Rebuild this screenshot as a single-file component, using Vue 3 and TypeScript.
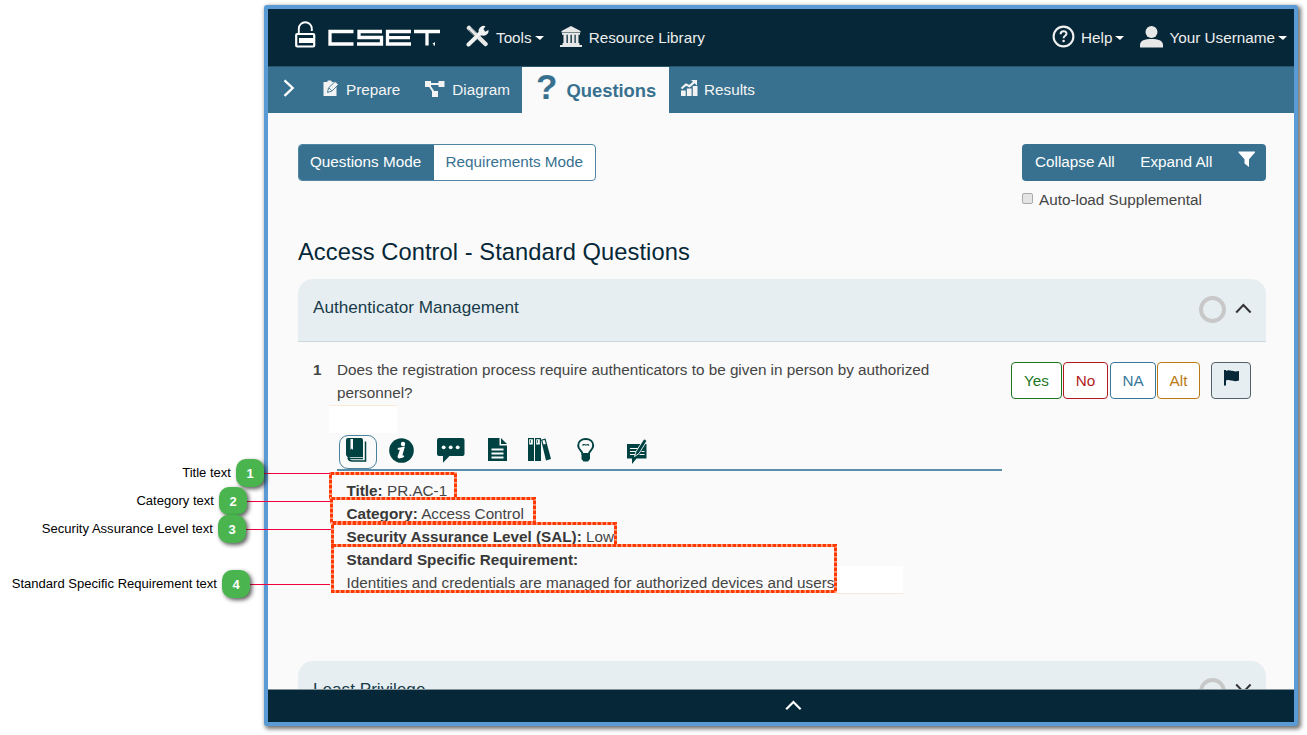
<script setup lang="ts">
interface Callout { n: number; text: string; right: number; top: number; end: number }
interface Box { x: number; y: number; w: number; h: number }
interface Answer { label: string; kind: string }

const callouts: Callout[] = [
  { n: 1, text: 'Title text', right: 264, top: 459, end: 330 },
  { n: 2, text: 'Category text', right: 247, top: 487, end: 330 },
  { n: 3, text: 'Security Assurance Level text', right: 246, top: 515, end: 331 },
  { n: 4, text: 'Standard Specific Requirement text', right: 250, top: 570, end: 330 },
]
const boxes: Box[] = [
  { x: 330.5, y: 473.5, w: 125, h: 25 },
  { x: 331.5, y: 498.5, w: 203, h: 24 },
  { x: 332.5, y: 523.5, w: 283, h: 22 },
  { x: 332.5, y: 545.5, w: 503, h: 46 },
]
const answers: Answer[] = [
  { label: 'Yes', kind: 'yes' },
  { label: 'No', kind: 'no' },
  { label: 'NA', kind: 'na' },
  { label: 'Alt', kind: 'alt' },
]
</script>

<template>
  <div class="page">
    <div class="window">
      <header class="topbar">
        <svg class="lock" width="22" height="28" viewBox="0 0 22 28">
          <path d="M3.800 12V7.500a6.500 6.200 0 0 1 13 0V10" fill="none" stroke="#fff" stroke-width="1.900" />
          <rect x="1.200" y="13" width="18" height="12.500" rx="1" fill="none" stroke="#fff" stroke-width="2.200" />
          <path d="M4 17h15v5H4z" fill="#fff" />
        </svg>
        <svg class="wordmark" width="114" height="18" viewBox="0 0 114 18" role="img" aria-label="CSET">
          <g fill="none" stroke="#fff" stroke-width="3.300">
            <path d="M25.500 2.500H2v12.500h23.500" />
            <path d="M54 2.500H31v6h22.500v6.500H29" />
            <path d="M83 2.500H59.500v12.500H83M59.500 8.700H82" />
            <path d="M86 2.500h26M99 2.500v14" />
          </g>
          <path d="M107 13v3.500h-1.500V15h-1.300z" fill="#fff" />
        </svg>
        <svg class="tools" width="23" height="22" viewBox="0 0 23 22">
          <path d="M3 3l16.500 16" stroke="#e8e8e8" stroke-width="4.500" stroke-linecap="round" />
          <path d="M2.500 4.500l9 9M5 2.500l6 6" stroke="#052737" stroke-width=".5" />
          <path d="M10 10l2.500 2.500" stroke="#052737" stroke-width="6" />
          <path d="M10 10l6.500 6.500" stroke="#e8e8e8" stroke-width="2" />
          <path d="M2.500 19.500L16.500 6" stroke="#f1f1f1" stroke-width="4" stroke-linecap="round" />
          <path d="M19.500 1.200a5 5 0 1 0 3 3.800l-3.500 1.800-2-2z" fill="#f1f1f1" />
        </svg>
        <span class="menu-text tools-label">Tools</span><i class="caret"></i>
        <svg class="library" width="22" height="22" viewBox="0 0 22 22" fill="#e8e8e8">
          <path d="M11 0l9.500 5v1.500h-19V5zM2 7h18v1.700H2zM3.500 8.500h3v9h-3zM7.800 8.500h2.700v9H7.800zM11.800 8.500h2.700v9h-2.700zM15.700 8.500h2.800v9h-2.800zM2.500 17h17v2h-17zM0 19h22v2H0z" />
        </svg>
        <span class="menu-text">Resource Library</span>
        <svg class="help" width="23" height="23" viewBox="0 0 23 23">
          <circle cx="11.500" cy="11.500" r="9.900" fill="none" stroke="#f0f0f0" stroke-width="2.100" />
          <path d="M8.600 9.200c0-4 6-4 5.900-.4 0 2-2.900 2-2.900 4.400" fill="none" stroke="#f0f0f0" stroke-width="2" />
          <circle cx="11.600" cy="16" r="1.300" fill="#f0f0f0" />
        </svg>
        <span class="menu-text help-label">Help</span><i class="caret"></i>
        <svg class="user" width="23" height="22" viewBox="0 0 23 22" fill="#e8e8e8">
          <circle cx="11.500" cy="6" r="6" />
          <path d="M0 21.500v-2.500c0-4.500 5-6 11.500-6S23 14.500 23 19v2.500z" />
        </svg>
        <span class="menu-text user-label">Your Username</span><i class="caret"></i>
      </header>

      <nav class="tabs">
        <svg class="expand" width="12" height="18" viewBox="0 0 12 18"><path d="M1.500 1.300L9.700 9l-8.200 7.800" fill="none" stroke="#fff" stroke-width="2.300" /></svg>
        <svg class="prepare" width="17" height="17" viewBox="0 0 17 17">
          <path d="M.5 2h3.500l1-1.600h3L9 2h4.500v14H.5z" fill="#f3f3f3" />
          <path d="M4.500 12.500l1-4.500 6.500-6.500 3.500 3L9 11z" fill="#f3f3f3" stroke="#38718f" stroke-width=".9" />
          <path d="M6 8l2.700 2.700" stroke="#38718f" stroke-width=".8" />
        </svg>
        <span class="tab-text">Prepare</span>
        <svg class="diagram" width="20" height="17" viewBox="0 0 20 17" fill="#f3f3f3">
          <path d="M0 0h6v6H0zM13.500 0h6v6h-6zM7 10h6v6H7z" /><path d="M5 3h9M4 4l5 7.500" stroke="#f3f3f3" stroke-width="2" />
        </svg>
        <span class="tab-text">Diagram</span>
        <div class="active-tab"><span class="qmark">?</span><span class="active-text">Questions</span></div>
        <svg class="results" width="17" height="16" viewBox="0 0 17 16">
          <path d="M0 10.500h4.700V16H0zM5.900 8.500h4.700V16H5.900zM11.800 6h4.700v10h-4.700z" fill="#f3f3f3" />
          <path d="M.5 8.500L5 4.500l3.500 1.700L14 1.500" fill="none" stroke="#f3f3f3" stroke-width="2.200" /><path d="M10 0h6v5.500z" fill="#f3f3f3" />
        </svg>
        <span class="tab-text">Results</span>
      </nav>

      <main class="content">
        <div class="toolbar">
          <div class="modes"><span class="mode on">Questions Mode</span><span class="mode">Requirements Mode</span></div>
          <div class="side">
            <div class="actions">
              <span>Collapse All</span><span>Expand All</span>
              <svg width="18" height="17" viewBox="0 0 18 17"><path d="M.5.500h16.500v1L11 8.300V16L6.500 12.500V8.300L.5 1.500z" fill="#fff" /></svg>
            </div>
            <div class="auto"><i class="check"></i><span>Auto-load Supplemental</span></div>
          </div>
        </div>

        <h1>Access Control - Standard Questions</h1>

        <section class="panel-head">
          <span>Authenticator Management</span>
          <i class="ring"></i>
          <svg class="chev" width="17" height="11" viewBox="0 0 17 11"><path d="M1.200 9.500l7.200-7.500 7.200 7.500" fill="none" stroke="#333" stroke-width="2" /></svg>
        </section>

        <div class="question">
          <b class="num">1</b>
          <p>Does the registration process require authenticators to be given in person by authorized<br>personnel?</p>
          <div class="answers">
            <span v-for="a in answers" :key="a.kind" class="answer" :class="a.kind">{{ a.label }}</span>
            <span class="answer flag">
              <svg width="16" height="16" viewBox="0 0 16 16" fill="#052737"><path d="M0 0h2v15.500H0zM2 1c4-2 6 1.500 13 0v9.500c-6 2-9-1.500-13 0z" /></svg>
            </span>
          </div>
        </div>

        <div class="details">
          <div class="icons">
            <span class="selected">
              <svg width="21" height="25" viewBox="0 0 21 25">
                <path d="M2 0h13q2 0 2 2v17H3c-2 0-3-1-3-3V2q0-2 2-2z" fill="#004242" />
                <path d="M4.500 1h2.500V12l-1.300-1.500L4.500 12z" fill="#fafafa" />
                <path d="M2 17.500c0 2 1 3 3 3h12M19.500 3.500v19.500H6.500c-2.500 0-4-1-4.500-3" fill="none" stroke="#004242" stroke-width="1.500" />
              </svg>
            </span>
            <svg class="info" width="25" height="25" viewBox="0 0 25 25">
              <circle cx="12.500" cy="12.500" r="12.300" fill="#004242" /><circle cx="14" cy="6" r="2.200" fill="#fff" />
              <path d="M8.800 11l5.700-1.200-2.500 8.700c-.2 1 1 .6 2.700-.8" fill="none" stroke="#fff" stroke-width="2" /><path d="M11.300 10.500h3.500L12 20c-2 1-4 0-3.300-2z" fill="#fff" />
            </svg>
            <svg class="chat" width="28" height="25" viewBox="0 0 28 25">
              <path d="M2 0h23.500q2 0 2 2v14q0 2-2 2H12.500L6 24.700V18H2q-2 0-2-2V2q0-2 2-2z" fill="#004242" /><g fill="#fff"><circle cx="6.700" cy="9.300" r="1.900" /><circle cx="13.700" cy="9.300" r="1.900" /><circle cx="20.700" cy="9.300" r="1.900" /></g>
            </svg>
            <svg class="doc" width="20" height="23" viewBox="0 0 20 23">
              <path d="M0 0h11.500v7.500H19V23H0zM13 0l6 6h-6z" fill="#004242" /><path d="M3.500 11.500h12M3.500 15.500h12M3.500 19.500h12" stroke="#fafafa" stroke-width="1.800" />
            </svg>
            <svg class="books" width="24" height="23" viewBox="0 0 24 23">
              <path d="M.6.600h4.800v21.800H.6zM7.600.600h4.800v21.800H7.600z" fill="#fff" stroke="#004242" stroke-width="1.200" />
              <path d="M0 6.500h6V23H0zM7 6.500h6V23H7z" fill="#004242" />
              <path d="M13 1.700l4.500-1.200L23 21l-5 1.500z" fill="#004242" /><path d="M14.300 2.500l2.300-.6 1.200 4-2.300.6z" fill="#fff" /><path d="M2.500 2v3M9.500 2v3" stroke="#004242" stroke-width=".7" />
            </svg>
            <svg class="bulb" width="18" height="24" viewBox="0 0 18 24">
              <path d="M5.500 16c0-3-4.300-4-4.300-8.500C1.200 3.500 4.500 1 8.700 1s7.500 2.500 7.500 6.500c0 4.500-4.300 5.500-4.300 8.500z" fill="#fafafa" stroke="#004242" stroke-width="2" />
              <path d="M5.500 7.500C6.500 5.500 8 7 9 7s2-1.300 3 .5" fill="none" stroke="#004242" stroke-width="1.200" /><path d="M4.500 15.500h8.500v5.500l-2 2.500H6.500l-2-2.500z" fill="#004242" />
            </svg>
            <svg class="note" width="21" height="26" viewBox="0 0 21 26">
              <path d="M0 6h19.500v14.500H9.500L5 26v-5.500H0z" fill="#004242" /><path d="M3 10.500h8M3 13.500h6M3 16.500h5M14.500 13.500h3M12.500 16.500h5" stroke="#fafafa" stroke-width="1" />
              <path d="M7.500 18.500l1.500-5L17 .8l3 1.900-8 12.800z" fill="#004242" stroke="#fafafa" stroke-width=".9" />
            </svg>
          </div>
          <div class="facts">
            <div><b>Title:</b> PR.AC-1</div>
            <div><b>Category:</b> Access Control</div>
            <div><b>Security Assurance Level (SAL):</b> Low</div>
            <div><b>Standard Specific Requirement:</b></div>
            <div>Identities and credentials are managed for authorized devices and users</div>
          </div>
        </div>

        <section class="panel-head second">
          <span>Least Privilege</span>
          <i class="ring"></i>
          <svg class="chev" width="17" height="11" viewBox="0 0 17 11"><path d="M1.200 1.500l7.200 7.500 7.200-7.500" fill="none" stroke="#333" stroke-width="2" /></svg>
        </section>
        <i class="patch one"></i>
        <i class="patch two"></i>
      </main>

      <footer class="drawer">
        <svg width="17" height="11" viewBox="0 0 17 11"><path d="M1.200 9.300l7.200-7.300 7.200 7.300" fill="none" stroke="#fff" stroke-width="2.200" /></svg>
      </footer>
    </div>

    <svg class="overlay" width="1307" height="735">
      <g v-for="(b, i) in boxes" :key="i" fill="none" stroke-width="3">
        <rect :x="b.x" :y="b.y" :width="b.w" :height="b.h" stroke="#ffb9a3" />
        <rect :x="b.x" :y="b.y" :width="b.w" :height="b.h" stroke="#ff3900" stroke-dasharray="3.700 1.300" />
      </g>
      <path v-for="c in callouts" :key="c.n" :d="`M${c.right} ${c.top + 14.5}H${c.end}`" stroke="#f0003c" />
    </svg>
    <div v-for="c in callouts" :key="c.n" class="callout" :style="{ top: c.top + 'px', width: c.right + 'px' }">
      <span>{{ c.text }}</span><b>{{ c.n }}</b>
    </div>
  </div>
</template>

<style>
body { margin: 0; background: #fff; }
</style>

<style scoped>
* { box-sizing: border-box; }
svg { display: block; flex: none; }
.page { position: relative; width: 1307px; height: 735px; overflow: hidden; padding: 5px 0 0 264px; font: 15.27px/22.8px "Liberation Sans", Arial, sans-serif; color: #444; white-space: nowrap; }
.window { width: 1034px; height: 721px; border: 4px solid #5b9bd5; border-radius: 3px; box-shadow: 2px 2px 4px 1px rgba(0,0,0,.55); display: flex; flex-direction: column; background: #fafafa; }
.topbar { height: 57px; flex: none; background: #052737; display: flex; align-items: center; color: #eee; }
.lock { margin: -5px 0 0 27px; }
.wordmark { margin: 1px 0 0 11px; }
.tools { margin-left: 24px; margin-top: -3px; }
.tools-label { margin-left: 7px; }
.menu-text { padding-top: 2px; }
.caret { border: 4.5px solid transparent; border-left-width: 5px; border-top-color: #fff; border-bottom: 0; margin: 1px 0 0 3px; }
.library { margin: -1px 7px 0 16px; }
.help { margin: -2px 6px 0 auto; }
.user { margin: -2px 6px 0 16px; }
.user-label + .caret { margin-right: 7px; }
.tabs { height: 47px; flex: none; background: #38718f; border-top: 1px solid #29566d; display: flex; align-items: center; color: #f5f5f5; }
.expand { margin: -4px 0 0 15px; }
.prepare { margin: -4px 6px 0 28px; }
.diagram { margin: -2px 7px 0 25px; }
.active-tab { margin-left: 12px; width: 147px; height: 46px; background: #fafafa; color: #38718f; font-weight: bold; display: flex; align-items: center; }
.qmark { font-size: 35px; line-height: 40px; margin: -6px 9px 0 14px; }
.active-text { font-size: 18.4px; padding-top: 2px; }
.results { margin: -4px 6px 0 12px; }
.content { position: relative; flex: 1; min-height: 0; overflow: hidden; padding: 31px 28px 0 30px; }
.toolbar { display: flex; justify-content: space-between; height: 66px; }
.modes { display: flex; width: 298px; height: 37px; border: 1px solid #4f85a2; border-radius: 4px; background: #fff; overflow: hidden; }
.mode { padding: 6px 12px 0 11.5px; color: #38718f; }
.mode.on { background: #38718f; color: #fff; width: 135px; padding-left: 11px; }
.side { width: 244px; }
.actions { height: 37px; background: #38718f; border-radius: 4px; color: #fff; display: flex; padding: 7px 0 0 13px; gap: 25.5px; }
.auto { display: flex; padding-top: 8px; }
.check { width: 11px; height: 11px; border: 1px solid #aaa; border-radius: 2px; background: #e4e4e4; margin: 4px 6px 0 0; }
h1 { margin: 27px 0 13px; font-size: 23.7px; letter-spacing: .06px; line-height: 31px; font-weight: normal; color: #052737; height: 31px; }
.panel-head { margin-top: -2px; height: 63px; background: #e7eef2; border-bottom: 1px solid #ccd6db; border-radius: 15px 15px 0 0; padding: 17px 14px 0 15px; display: flex; font-size: 17.15px; color: #173b49; }
.panel-head .ring { margin: 0 9px 0 auto; }
.ring { width: 27px; height: 27px; border: 4px solid #c8c8c8; border-radius: 50%; }
.chev { margin-top: 7px; }
.question { display: flex; height: 93px; padding: 17px 15px 0; }
.num { width: 24px; }
p { margin: 0; }
.answers { display: flex; margin: 3px 0 0 auto; }
.answer { height: 37px; border: 1px solid; border-radius: 4px; background: #fff; text-align: center; line-height: 35px; }
.yes { width: 51px; color: #1c761c; margin-right: 1px; }
.no { width: 45px; color: #b01b20; margin-right: 2px; }
.na { width: 46px; color: #38789b; margin-right: 1px; }
.alt { width: 43px; color: #b97a13; margin-right: 11px; }
.flag { width: 40px; color: #52616a; background: #e7eef2; padding: 7px 0 0 12px; }
.details { margin-left: 39px; width: 665px; }
.icons { height: 36px; border-bottom: 2px solid #5a8eaa; display: flex; align-items: flex-start; padding-left: 2px; }
.selected { width: 38px; height: 34px; border: 1px solid #4a819f; border-radius: 9px; padding: 2px 0 0 6px; margin-right: 12px; }
.info { margin-top: 3px; }
.chat { margin: 3px 0 0 23px; }
.doc { margin: 3px 0 0 23px; }
.books { margin: 3px 0 0 20px; }
.bulb { margin: 3px 0 0 25px; }
.note { margin: 3px 0 0 32px; }
.facts { padding: 8px 0 0 9.5px; line-height: 23px; height: 190px; }
.facts b { color: #383838; }
.second { margin-top: 0; }
.second .chev { margin-top: 5px; }
.patch { position: absolute; width: 68px; height: 28px; background: #fff; }
.patch.one { left: 61px; top: 292px; border-top: 1px solid #fbead9; }
.patch.two { left: 567px; top: 453px; border-bottom: 1px solid #f4eadc; }
.drawer { height: 33px; flex: none; background: #052737; border-top: 1px solid #839199; display: flex; justify-content: center; padding: 10px 0 0 24px; }
.overlay { position: absolute; left: 0; top: 0; }
.callout { position: absolute; left: 0; height: 28px; display: flex; justify-content: flex-end; align-items: center; font-size: 13.05px; line-height: 30px; color: #000; }
.callout b { width: 28px; height: 28px; margin-left: 5px; border-radius: 10px; background: #4ab54e; color: #fff; text-align: center; font-size: 13px; box-shadow: 2px 2px 4px rgba(0,0,0,.65); }
</style>
